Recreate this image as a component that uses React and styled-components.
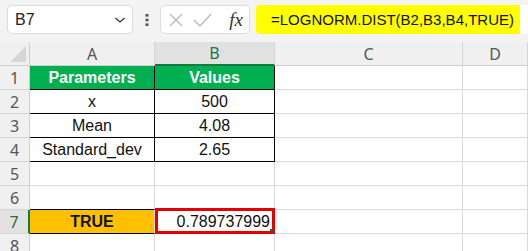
import React from "react";
import styled, { createGlobalStyle } from "styled-components";

const GlobalStyle = createGlobalStyle`
    html, body {
        margin: 0;
        padding: 0;
        background: #ffffff;
        overflow: hidden;
    }
`;

const Page = styled.div`
    width: 528px;
    height: 251px;
    overflow: hidden;
    background: #ffffff;
    font-family: "Liberation Sans", Arial, sans-serif;
`;

const FormulaBar = styled.div`
    height: 42px;
    box-sizing: border-box;
    padding: 5px 0 8px 7px;
    display: flex;
    align-items: center;
    background: #f3f3f3;
`;

const NameBox = styled.div`
    width: 126px;
    height: 29px;
    box-sizing: border-box;
    display: flex;
    align-items: center;
    justify-content: space-between;
    padding: 0 6px 0 7px;
    background: #ffffff;
    border: 1px solid #dcdcdc;
    border-radius: 5px;
    font-size: 16px;
    color: #222;
`;

const Dots = styled.div`
    width: 27px;
    display: flex;
    justify-content: center;
`;

const FxBox = styled.div`
    width: 90px;
    height: 29px;
    box-sizing: border-box;
    display: flex;
    align-items: center;
    gap: 9px;
    padding: 0 6px 0 7px;
    background: #ffffff;
    border: 1px solid #dcdcdc;
    border-radius: 5px;
`;

const FxLabel = styled.span`
    margin-left: auto;
    font-family: "Liberation Serif", "Times New Roman", serif;
    font-style: italic;
    font-size: 19px;
    color: #333;
`;

const FormulaField = styled.div`
    flex: 1;
    height: 29px;
    margin-left: 6px;
    display: flex;
    background: #ffffff;
    border-radius: 4px 0 0 4px;
    overflow: hidden;
`;

const Highlight = styled.div`
    width: 264px;
    box-sizing: border-box;
    display: flex;
    align-items: center;
    padding-left: 15px;
    background: #ffff00;
    font-size: 15px;
    color: #111;
    white-space: nowrap;
`;

const Sheet = styled.div`
    display: grid;
    grid-template-columns: 30px 125px 120px 188px 1fr;
    grid-auto-rows: 24px;
`;

const Corner = styled.div`
    background: #f0f0f0;
    border-right: 1px solid #cfcfcf;
    border-bottom: 1px solid #cfcfcf;
    box-sizing: border-box;
    display: flex;
    align-items: flex-end;
    justify-content: flex-end;
    padding: 0 3px 3px 0;
`;

const ColHead = styled.div`
    box-sizing: border-box;
    display: flex;
    align-items: center;
    justify-content: center;
    background: ${(p) => (p.$active ? "#e1e1e1" : "#f0f0f0")};
    border-right: 1px solid #d4d4d4;
    border-bottom: ${(p) => (p.$active ? "2px solid #107c41" : "1px solid #cfcfcf")};
    color: ${(p) => (p.$active ? "#217346" : "#555")};
    font-family: "Noto Sans", "Open Sans", sans-serif;
    font-size: 16px;
`;

const RowHead = styled.div`
    box-sizing: border-box;
    display: flex;
    align-items: center;
    justify-content: center;
    background: ${(p) => (p.$active ? "#e1e1e1" : "#f0f0f0")};
    border-right: ${(p) => (p.$active ? "2px solid #107c41" : "1px solid #cfcfcf")};
    border-bottom: 1px solid #d4d4d4;
    color: ${(p) => (p.$active ? "#217346" : "#555")};
    font-family: "Noto Sans", "Open Sans", sans-serif;
    font-size: 16px;
`;

const Cell = styled.div`
    position: relative;
    box-sizing: border-box;
    display: flex;
    align-items: center;
    justify-content: ${(p) => (p.$align === "right" ? "flex-end" : "center")};
    padding: 0 ${(p) => (p.$align === "right" ? "4px" : "0")} 0 0;
    background: ${(p) => p.$fill || "#ffffff"};
    border-right: 1px solid ${(p) => (p.$boxed ? "#000" : "#dadada")};
    border-bottom: 1px solid ${(p) => (p.$boxed || p.$underline ? "#000" : "#dadada")};
    color: ${(p) => p.$color || "#111"};
    font-size: 16px;
    font-weight: ${(p) => (p.$bold ? 700 : 400)};
    white-space: nowrap;
`;

const Selection = styled.div`
    position: absolute;
    left: 0;
    top: -2px;
    right: -1px;
    bottom: -1px;
    border: 3px solid #e60000;
    pointer-events: none;
`;

const FillHandle = styled.span`
    position: absolute;
    right: 1px;
    bottom: 1px;
    width: 3px;
    height: 3px;
    background: #1e6b3e;
`;

const table = [
    { a: "Parameters", b: "Values", header: true },
    { a: "x", b: "500" },
    { a: "Mean", b: "4.08" },
    { a: "Standard_dev", b: "2.65" },
];

const Blank = () => (
    <>
        <Cell />
        <Cell />
    </>
);

export default function App() {
    return (
        <Page>
            <GlobalStyle />
            <FormulaBar>
                <NameBox>
                    <span>B7</span>
                    <svg width="12" height="8" viewBox="0 0 12 8">
                        <path d="M1.5 2 L6 6 L10.5 2" fill="none" stroke="#333" strokeWidth="1.3" />
                    </svg>
                </NameBox>
                <Dots>
                    <svg width="4" height="12" viewBox="0 0 4 12">
                        <rect x="0.5" y="0" width="3" height="2.6" fill="#555" />
                        <rect x="0.5" y="4.7" width="3" height="2.6" fill="#555" />
                        <rect x="0.5" y="9.4" width="3" height="2.6" fill="#555" />
                    </svg>
                </Dots>
                <FxBox>
                    <svg width="16" height="16" viewBox="0 0 16 16">
                        <path d="M2 2 L14 14 M14 2 L2 14" stroke="#b8b8b8" strokeWidth="1.3" fill="none" />
                    </svg>
                    <svg width="19" height="16" viewBox="0 0 19 16">
                        <path d="M1 8 L7 14 L18 2" stroke="#b8b8b8" strokeWidth="1.3" fill="none" />
                    </svg>
                    <FxLabel>fx</FxLabel>
                </FxBox>
                <FormulaField>
                    <Highlight>=LOGNORM.DIST(B2,B3,B4,TRUE)</Highlight>
                </FormulaField>
            </FormulaBar>

            <Sheet>
                <Corner>
                    <svg width="16" height="16" viewBox="0 0 16 16">
                        <polygon points="16,0 16,16 0,16" fill="#d6d6d6" />
                    </svg>
                </Corner>
                <ColHead>A</ColHead>
                <ColHead $active>B</ColHead>
                <ColHead>C</ColHead>
                <ColHead>D</ColHead>

                {table.map((row, i) => (
                    <React.Fragment key={row.a}>
                        <RowHead>{i + 1}</RowHead>
                        <Cell
                            $boxed
                            $fill={row.header ? "#00b050" : undefined}
                            $color={row.header ? "#ffffff" : undefined}
                            $bold={row.header}
                        >
                            {row.a}
                        </Cell>
                        <Cell
                            $boxed
                            $fill={row.header ? "#00b050" : undefined}
                            $color={row.header ? "#ffffff" : undefined}
                            $bold={row.header}
                        >
                            {row.b}
                        </Cell>
                        <Blank />
                    </React.Fragment>
                ))}

                <RowHead>5</RowHead>
                <Cell />
                <Cell />
                <Blank />

                <RowHead>6</RowHead>
                <Cell $underline />
                <Cell />
                <Blank />

                <RowHead $active>7</RowHead>
                <Cell $fill="#ffc000" $underline $bold>TRUE</Cell>
                <Cell $align="right">
                    0.789737999
                    <Selection />
                    <FillHandle />
                </Cell>
                <Blank />

                <RowHead>8</RowHead>
                <Cell />
                <Cell />
                <Blank />
            </Sheet>
        </Page>
    );
}
